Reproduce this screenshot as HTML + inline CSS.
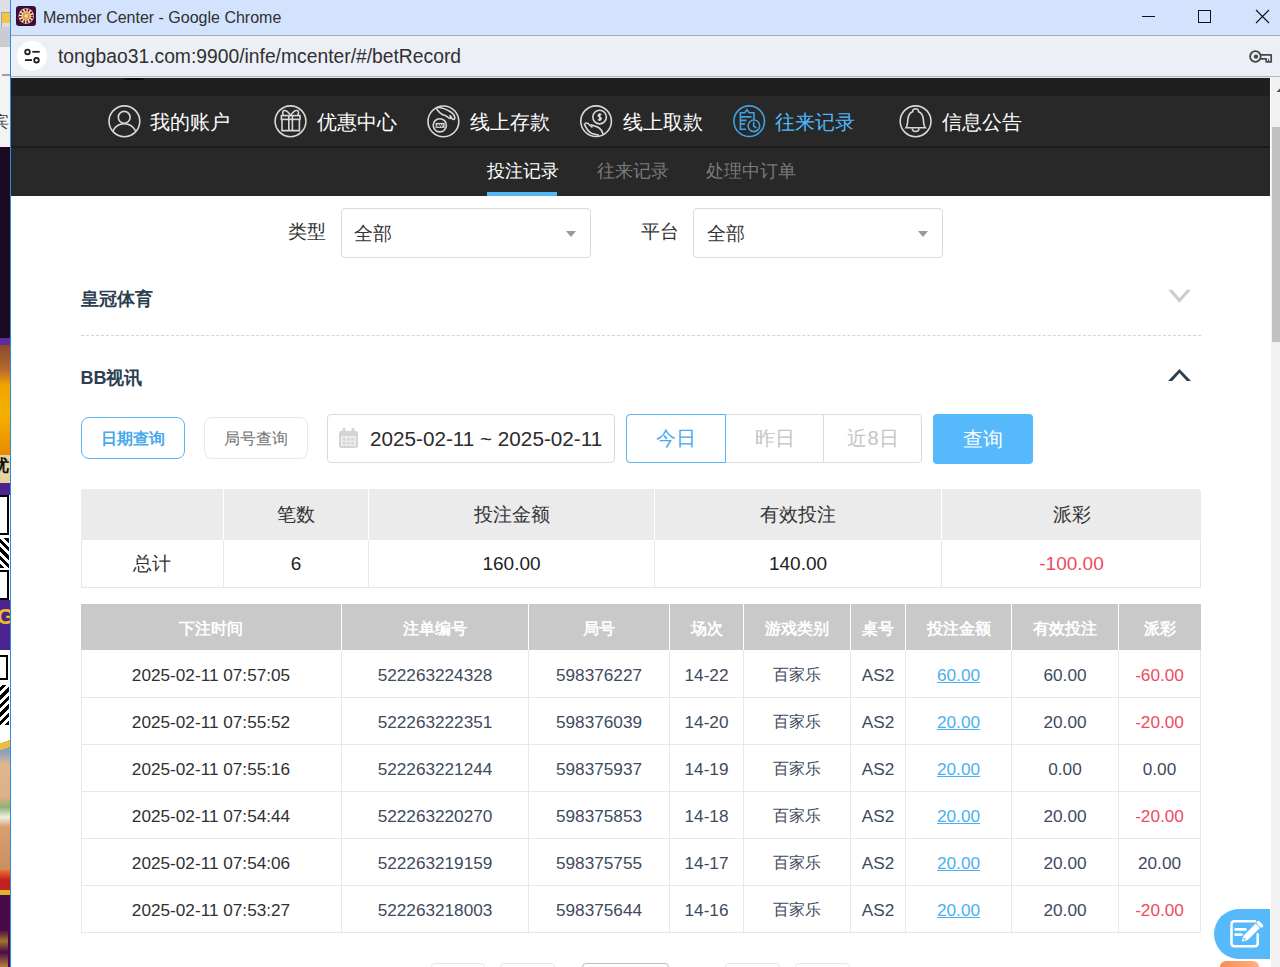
<!DOCTYPE html>
<html><head><meta charset="utf-8">
<style>
*{box-sizing:border-box;margin:0;padding:0}
html,body{width:1280px;height:967px;overflow:hidden;background:#fff;font-family:"Liberation Sans",sans-serif}
.a{position:absolute;white-space:nowrap}
#wborder{left:10px;top:0;width:1px;height:967px;background:#2b8be0}
#titlebar{left:11px;top:0;width:1269px;height:35px;background:#d3e3fd}
#tline{left:11px;top:35px;width:1269px;height:1px;background:#a6a9ae}
#addr{left:11px;top:36px;width:1269px;height:40px;background:#edeff7}
#aline{left:11px;top:76px;width:1269px;height:1px;background:#b4b6ba}
#sb{left:1270px;top:77px;width:10px;height:890px;background:#f1f1f1;border-left:1px solid #fff}
#thumb{left:1272px;top:127px;width:8px;height:215px;background:#c1c1c1}
.navt{font-size:20px;color:#fff;line-height:20px;top:112px}
.ico{top:104.6px;width:33px;height:33px}
.sub{font-size:17.5px;line-height:18px;top:161.5px;color:#7a7a7a}
.lbl{font-size:19px;line-height:20px;color:#333}
.sel{border:1px solid #dadada;border-radius:4px;background:#fff}
.tri{width:0;height:0;border-left:5.5px solid transparent;border-right:5.5px solid transparent;border-top:6px solid #999}
.h2{font-size:18px;font-weight:bold;color:#2c3e50;line-height:19px}
.btn{border-radius:8px;font-size:16.2px;line-height:16px;padding-top:0;display:flex;align-items:center;justify-content:center}
.seg{top:414px;height:49px;font-size:20px;color:#c4c4c4;display:flex;align-items:center;justify-content:center}
.c{position:absolute;display:flex;align-items:center;justify-content:center;white-space:nowrap}
.th{font-size:16px;font-weight:bold;color:#fff;padding-top:4px}
.td{font-size:17.2px;color:#3e4a5e;padding-top:4px}
.tk{color:#303030}
.cj{font-size:16px;color:#3e4a5e}
.lk span{color:#4ab0f2;text-decoration:underline}
.rd{color:#f04a5c}
</style></head><body>
<!-- desktop strip -->
<div class="a" style="left:0;top:0;width:10px;height:967px;overflow:hidden;background:#1c0b26">
<div class="a" style="left:0;top:0;width:10px;height:27px;background:#dcdfe4"></div>
<div class="a" style="left:1px;top:12px;width:9px;height:19px;background:linear-gradient(#f5c342 0,#f5c342 60%,#d8dde6 60%);border:1px solid #9aa6b8;border-right:none"></div>
<div class="a" style="left:0;top:27px;width:10px;height:20px;background:#c9ccd2"></div>
<div class="a" style="left:0;top:47px;width:10px;height:100px;background:#f3f3f3"></div>
<div class="a" style="left:2px;top:74px;width:8px;height:2px;background:#a0a0a0"></div>
<div class="a" style="left:-7px;top:114px;font-size:16px;line-height:16px;color:#333">宾</div>
<div class="a" style="left:0;top:147px;width:10px;height:191px;background:#1a0a24"></div>
<div class="a" style="left:0;top:338px;width:10px;height:7px;background:#5e2aa0"></div>
<div class="a" style="left:0;top:345px;width:10px;height:110px;background:linear-gradient(#8a4a2a 0,#b86a30 25px,#f0a400 40px,#f4b000 70px,#e88a00 110px)"></div>
<div class="a" style="left:0;top:455px;width:10px;height:28px;background:#e6d4a0"></div>
<div class="a" style="left:-8px;top:457px;font-size:17px;line-height:17px;font-weight:bold;color:#111">优</div>
<div class="a" style="left:0;top:483px;width:10px;height:12px;background:#4a2590"></div>
<div class="a" style="left:0;top:495px;width:10px;height:105px;background:#fff"></div>
<div class="a" style="left:0;top:495px;width:9px;height:40px;border:2px solid #000;border-left:none"></div>
<div class="a" style="left:0;top:538px;width:9px;height:30px;background:repeating-linear-gradient(45deg,#000 0,#000 3px,#fff 3px,#fff 6px)"></div>
<div class="a" style="left:0;top:570px;width:9px;height:30px;border:2px solid #000;border-left:none"></div>
<div class="a" style="left:0;top:600px;width:10px;height:50px;background:#4a2590"></div>
<div class="a" style="left:-3px;top:606px;font-size:22px;line-height:22px;font-weight:bold;color:#f0c020">G</div>
<div class="a" style="left:0;top:650px;width:10px;height:95px;background:#fff"></div>
<div class="a" style="left:0;top:655px;width:8px;height:25px;border:2px solid #000;border-left:none"></div>
<div class="a" style="left:0;top:685px;width:9px;height:40px;background:repeating-linear-gradient(-45deg,#000 0,#000 3px,#fff 3px,#fff 6px)"></div>
<div class="a" style="left:0;top:738px;width:10px;height:14px;background:linear-gradient(160deg,#fff 0,#fff 30%,#e8c040 30%,#e8c040 70%,#8aa0c0 70%)"></div>
<div class="a" style="left:0;top:752px;width:10px;height:118px;background:linear-gradient(#8aa0c0 0,#e0b890 12px,#dcb088 45px,#90b070 55px,#f0f0e0 65px,#d8a070 75px,#c89060 118px)"></div>
<div class="a" style="left:0;top:870px;width:10px;height:25px;background:linear-gradient(#f07030 0,#c02020 40%,#c02020 80%,#e0b030 80%)"></div>
<div class="a" style="left:0;top:895px;width:10px;height:72px;background:#4a0a48"></div>
<div class="a" style="left:0;top:930px;width:8px;height:37px;background:linear-gradient(#4a0a48 0,#c8a020 30%,#4a0a48 60%,#e0b030 100%);opacity:.7"></div>
</div>
<div class="a" id="wborder"></div>
<div class="a" id="titlebar"></div>
<div class="a" id="tline"></div>
<div class="a" id="addr"></div>
<div class="a" id="aline"></div>

<!-- favicon -->
<div class="a" style="left:16px;top:6px;width:20px;height:20px;background:#3b0f33;border-radius:3px"></div>
<svg class="a" style="left:16px;top:6px" width="20" height="20" viewBox="16 6 20 20"><circle cx="26.2" cy="16" r="7.7" fill="#f4ece8"/><circle cx="26.2" cy="16" r="5.9" fill="none" stroke="#8e1414" stroke-width="2.6" stroke-dasharray="1.75 1.34" transform="rotate(8 26.2 16)"/><circle cx="26.2" cy="16" r="3.9" fill="#dca634"/><circle cx="26.2" cy="16" r="1.7" fill="#eadcc0"/></svg>
<div class="a" style="left:43px;top:9.5px;font-size:16px;line-height:16px;color:#303030">Member Center - Google Chrome</div>
<!-- window controls -->
<div class="a" style="left:1142px;top:16px;width:13px;height:1px;background:#111"></div>
<div class="a" style="left:1198px;top:10px;width:13px;height:13px;border:1px solid #111"></div>
<svg class="a" style="left:1255px;top:9px" width="15" height="15" viewBox="0 0 15 15"><path d="M1 1L14 14M14 1L1 14" stroke="#111" stroke-width="1.1"/></svg>

<!-- address bar -->
<div class="a" style="left:17px;top:41px;width:30px;height:30px;border-radius:50%;background:#fff"></div>
<svg class="a" style="left:17px;top:41px" width="30" height="30" viewBox="0 0 30 30"><circle cx="10.5" cy="11" r="2.3" fill="none" stroke="#1f1f1f" stroke-width="1.8"/><path d="M15.3 10.8H22.7" stroke="#1f1f1f" stroke-width="1.8"/><circle cx="19.5" cy="19.3" r="2.3" fill="none" stroke="#1f1f1f" stroke-width="1.8"/><path d="M8 19.1H15" stroke="#1f1f1f" stroke-width="1.8"/></svg>
<div class="a" style="left:58px;top:47.3px;font-size:19.3px;line-height:20px;color:#303030">tongbao31.com:9900/infe/mcenter/#/betRecord</div>
<svg class="a" style="left:1244px;top:44px" width="36" height="26" viewBox="0 0 36 26"><circle cx="11.4" cy="12.5" r="5.3" fill="none" stroke="#474747" stroke-width="1.8"/><circle cx="12" cy="12.6" r="2.2" fill="#474747"/><path d="M16.2 10.9H27.2V17.8H22.2V14.8H16.4" fill="none" stroke="#474747" stroke-width="1.7" stroke-linejoin="round"/><path d="M24.6 14.8V17.5" stroke="#474747" stroke-width="1"/></svg>

<!-- page header -->
<div class="a" style="left:11px;top:77px;width:1259px;height:1px;background:#e8e8ec"></div><div class="a" style="left:11px;top:78px;width:1259px;height:18px;background:#1f1f1f"></div><div class="a" style="left:124px;top:78px;width:20px;height:2px;border-radius:50%;background:#050505"></div>
<div class="a" style="left:11px;top:96px;width:1259px;height:50px;background:#282828"></div>
<div class="a" style="left:11px;top:146px;width:1259px;height:2px;background:#1b1b1b"></div>
<div class="a" style="left:11px;top:148px;width:1259px;height:48px;background:#282828"></div>
<div class="a" id="sb"></div>
<div class="a" id="thumb"></div>
<svg class="a" style="left:1275.5px;top:87.5px" width="4.5" height="4.5" viewBox="0 0 6 6"><path d="M0 6L6 0V6Z" fill="#505050"/></svg>

<!-- NAV -->
<!--NAVSTART-->
<svg class="a ico" style="left:108px" viewBox="0 0 33 33" fill="none" stroke="#d8d8d8" stroke-width="1.6"><circle cx="16.4" cy="16.3" r="15.4"/><circle cx="16.2" cy="12.3" r="5.9"/><path d="M4.8 25.8C7.5 21 11.5 18.8 16.2 18.8S24.9 21 27.6 25.8"/></svg>
<div class="a navt" style="left:150px">我的账户</div>
<svg class="a ico" style="left:274px" viewBox="0 0 33 33" fill="none" stroke="#d8d8d8" stroke-width="1.6"><circle cx="16.5" cy="16.3" r="15.4"/><rect x="7.4" y="10.6" width="18.6" height="3.8"/><path d="M8 14.4V25.6H25.4V14.4M14.8 10.6V25.6M18.4 10.6V25.6"/><path d="M16.6 10.4C14.5 7.2 11.8 5 9.8 5.6C8.3 6.1 8.4 8.6 9.6 10.4M16.6 10.4C18.7 7.2 21.4 5 23.4 5.6C24.9 6.1 24.8 8.6 23.6 10.4"/></svg>
<div class="a navt" style="left:317px">优惠中心</div>
<svg class="a ico" style="left:427px" viewBox="0 0 33 33" fill="none" stroke="#d8d8d8" stroke-width="1.6"><circle cx="16.4" cy="16.4" r="15.4"/><path d="M9 2.6C11 6.5 14 9.5 18 10.6C20 11.2 21 12.6 22.6 13.2C24 13.7 24.6 12.6 23.8 11.6"/><path d="M10 2.2C14.5 2.4 20 4.5 23.8 7C26.4 8.8 28 11 27.8 13.5C27.4 14.8 26 14.6 25 13.4L22.5 10.2"/><circle cx="12.8" cy="20.3" r="6.6"/><rect x="8.6" y="17.9" width="9" height="5" fill="#d8d8d8" stroke="none"/><path d="M9.8 22L11 19.2L12.2 22L13.4 19.2L14.6 22L15.8 19.2" stroke="#282828" stroke-width="0.9"/></svg>
<div class="a navt" style="left:470px">线上存款</div>
<svg class="a ico" style="left:580px" viewBox="0 0 33 33" fill="none" stroke="#d8d8d8" stroke-width="1.6"><circle cx="16.1" cy="16.2" r="15.3"/><circle cx="19.6" cy="12.1" r="6.8"/><path d="M21.3 9.8C20.6 9 18.2 9 18.2 10.6C18.2 12.2 21.2 11.8 21.2 13.6C21.2 15.2 18.6 15.2 17.9 14.4M19.7 8.2V16" stroke-width="1.5"/><path d="M4.2 18.6C6 23 8.6 27 12 28.6L19 30.2"/><path d="M4.8 18.4C6.5 17.5 8.5 18.2 10 20.2L12.5 22.4"/><path d="M11 19.6C14 21 17 21.4 19.2 23C21.2 24.4 22.4 26.6 23 29"/></svg>
<div class="a navt" style="left:623px">线上取款</div>
<svg class="a ico" style="left:733px" viewBox="0 0 33 33" fill="none" stroke="#40a2e0" stroke-width="1.6"><circle cx="16.2" cy="16.2" r="15.3"/><path d="M13 24.3H7.4V7.8H11.8L13.9 4.6L16 7.8H20.9V14.8"/><path d="M7.4 11.9H18.5M7.4 15.4H13.5M7.4 18.9H12"/><circle cx="20.9" cy="20.8" r="5.8"/><path d="M20.7 16.8V21.2L23.5 23.2"/></svg>
<div class="a navt" style="left:775px;color:#50b8fa">往来记录</div>
<svg class="a ico" style="left:899px" viewBox="0 0 33 33" fill="none" stroke="#d8d8d8" stroke-width="1.6"><circle cx="16.6" cy="16.3" r="15.4"/><path d="M7 22.8H26.3C25 21 24.6 19 24.4 15C24 10.2 22.2 7.6 19.6 6.8C19.6 4.6 18.1 3.8 16.6 3.8S13.6 4.6 13.6 6.8C11 7.6 9.2 10.2 8.8 15C8.6 19 8.2 21 7 22.8Z"/><path d="M13.3 23.2C13.3 27.6 20 27.6 20 23.2"/></svg>
<div class="a navt" style="left:942px">信息公告</div>
<!-- subnav -->
<div class="a sub" style="left:487px;color:#fff">投注记录</div>
<div class="a" style="left:487px;top:192px;width:70px;height:4px;background:#55b6f6"></div>
<div class="a sub" style="left:597px">往来记录</div>
<div class="a sub" style="left:706px">处理中订单</div>
<!--NAVEND-->

<!-- CONTENT -->
<!--CONTENTSTART-->
<!-- filters -->
<div class="a lbl" style="left:288px;top:222px">类型</div>
<div class="a sel" style="left:341px;top:208px;width:250px;height:50px"></div>
<div class="a lbl" style="left:354px;top:224px">全部</div>
<div class="a tri" style="left:566px;top:231px"></div>
<div class="a lbl" style="left:641px;top:222px">平台</div>
<div class="a sel" style="left:693px;top:208px;width:250px;height:50px"></div>
<div class="a lbl" style="left:707px;top:224px">全部</div>
<div class="a tri" style="left:918px;top:231px"></div>
<!-- sections -->
<div class="a h2" style="left:81px;top:290px">皇冠体育</div>
<svg class="a" style="left:1160px;top:280px" width="40" height="30" viewBox="1160 280 40 30"><path d="M1168 289.7H1172.2L1179.5 298.2L1186.8 289.7H1191L1179.5 302.8Z" fill="#cccccc"/></svg>
<div class="a" style="left:81px;top:335px;width:1120px;height:1px;border-top:1px dashed #d4d4d4"></div>
<div class="a h2" style="left:80.5px;top:369px">BB视讯</div>
<svg class="a" style="left:1160px;top:360px" width="40" height="30" viewBox="1160 360 40 30"><path d="M1168 381H1172.2L1179.5 373L1186.8 381H1191L1179.5 368.9Z" fill="#2c3e50"/></svg>
<!-- buttons -->
<div class="a btn" style="left:81px;top:417px;width:104px;height:42px;border:1px solid #5cb4f2;color:#48a9ef;font-weight:bold">日期查询</div>
<div class="a btn" style="left:204px;top:417px;width:104px;height:42px;border:1px solid #e8e8e8;color:#707070">局号查询</div>
<div class="a sel" style="left:327px;top:414px;width:288px;height:49px"></div>
<svg class="a" style="left:338px;top:427px" width="21" height="22" viewBox="0 0 21 22"><rect x="1" y="4" width="19" height="17" rx="2" fill="#d4d4d4"/><rect x="3" y="9" width="15" height="10" fill="#ececec"/><g fill="#d4d4d4"><rect x="5" y="11" width="2.5" height="2.5"/><rect x="9.2" y="11" width="2.5" height="2.5"/><rect x="13.4" y="11" width="2.5" height="2.5"/><rect x="5" y="15" width="2.5" height="2.5"/><rect x="9.2" y="15" width="2.5" height="2.5"/><rect x="13.4" y="15" width="2.5" height="2.5"/></g><rect x="4.5" y="1" width="3" height="5" rx="1" fill="#d4d4d4"/><rect x="13.5" y="1" width="3" height="5" rx="1" fill="#d4d4d4"/></svg>
<div class="a" style="left:370px;top:429px;font-size:20.7px;line-height:20px;color:#2c2c2c">2025-02-11 ~ 2025-02-11</div>
<div class="a" style="left:626px;top:414px;width:296px;height:49px;border:1px solid #dadada;border-radius:4px"></div>
<div class="a seg" style="left:626px;width:100px;border:1px solid #5cb4f2;border-radius:4px 0 0 4px;color:#48a9ef">今日</div>
<div class="a seg" style="left:726px;width:97px">昨日</div>
<div class="a" style="left:823px;top:415px;width:1px;height:47px;background:#dadada"></div>
<div class="a seg" style="left:824px;width:98px">近8日</div>
<div class="a seg" style="left:933px;width:100px;height:50px;background:#56b9fb;border-radius:4px;color:#fff">查询</div>
<!-- summary table -->
<div class="a" style="left:81px;top:489px;width:1120px;height:99px;border:1px solid #e6e6e6;border-top:none;border-radius:4px 4px 0 0"></div>
<div class="a" style="left:81px;top:489px;width:1120px;height:51px;background:#ebebeb;border-radius:4px 4px 0 0"></div>
<div class="a" style="left:223px;top:489px;width:1px;height:98px;background:linear-gradient(#fff 0,#fff 51px,#e8e8e8 51px)"></div>
<div class="a" style="left:368px;top:489px;width:1px;height:98px;background:linear-gradient(#fff 0,#fff 51px,#e8e8e8 51px)"></div>
<div class="a" style="left:654px;top:489px;width:1px;height:98px;background:linear-gradient(#fff 0,#fff 51px,#e8e8e8 51px)"></div>
<div class="a" style="left:941px;top:489px;width:1px;height:98px;background:linear-gradient(#fff 0,#fff 51px,#e8e8e8 51px)"></div>
<div class="c lbl" style="left:224px;top:489px;width:144px;height:51px">笔数</div>
<div class="c lbl" style="left:369px;top:489px;width:285px;height:51px">投注金额</div>
<div class="c lbl" style="left:655px;top:489px;width:286px;height:51px">有效投注</div>
<div class="c lbl" style="left:942px;top:489px;width:259px;height:51px">派彩</div>
<div class="c lbl" style="left:81px;top:540px;width:142px;height:47px">总计</div>
<div class="c lbl" style="left:224px;top:540px;width:144px;height:47px;color:#222">6</div>
<div class="c lbl" style="left:369px;top:540px;width:285px;height:47px;color:#222">160.00</div>
<div class="c lbl" style="left:655px;top:540px;width:286px;height:47px;color:#222">140.00</div>
<div class="c lbl" style="left:942px;top:540px;width:259px;height:47px;color:#f04a5c">-100.00</div>
<!-- detail table -->
<div class="a" style="left:81px;top:604px;width:1120px;height:46px;background:#c9c9c9"></div>
<div class="a" style="left:81px;top:650px;width:1120px;height:283px;border:1px solid #e8e8e8;border-top:none"></div>
<div class="a" style="left:81px;top:697px;width:1120px;height:1px;background:#e8e8e8"></div>
<div class="a" style="left:81px;top:744px;width:1120px;height:1px;background:#e8e8e8"></div>
<div class="a" style="left:81px;top:791px;width:1120px;height:1px;background:#e8e8e8"></div>
<div class="a" style="left:81px;top:838px;width:1120px;height:1px;background:#e8e8e8"></div>
<div class="a" style="left:81px;top:885px;width:1120px;height:1px;background:#e8e8e8"></div>
<div class="a" style="left:341px;top:604px;width:1px;height:329px;background:linear-gradient(#fff 0,#fff 46px,#e8e8e8 46px)"></div>
<div class="a" style="left:528px;top:604px;width:1px;height:329px;background:linear-gradient(#fff 0,#fff 46px,#e8e8e8 46px)"></div>
<div class="a" style="left:669px;top:604px;width:1px;height:329px;background:linear-gradient(#fff 0,#fff 46px,#e8e8e8 46px)"></div>
<div class="a" style="left:743px;top:604px;width:1px;height:329px;background:linear-gradient(#fff 0,#fff 46px,#e8e8e8 46px)"></div>
<div class="a" style="left:850px;top:604px;width:1px;height:329px;background:linear-gradient(#fff 0,#fff 46px,#e8e8e8 46px)"></div>
<div class="a" style="left:905px;top:604px;width:1px;height:329px;background:linear-gradient(#fff 0,#fff 46px,#e8e8e8 46px)"></div>
<div class="a" style="left:1011px;top:604px;width:1px;height:329px;background:linear-gradient(#fff 0,#fff 46px,#e8e8e8 46px)"></div>
<div class="a" style="left:1118px;top:604px;width:1px;height:329px;background:linear-gradient(#fff 0,#fff 46px,#e8e8e8 46px)"></div>
<div class="c th" style="left:81px;top:604px;width:260px;height:46px">下注时间</div>
<div class="c th" style="left:342px;top:604px;width:186px;height:46px">注单编号</div>
<div class="c th" style="left:529px;top:604px;width:140px;height:46px">局号</div>
<div class="c th" style="left:670px;top:604px;width:73px;height:46px">场次</div>
<div class="c th" style="left:744px;top:604px;width:106px;height:46px">游戏类别</div>
<div class="c th" style="left:851px;top:604px;width:54px;height:46px">桌号</div>
<div class="c th" style="left:906px;top:604px;width:105px;height:46px">投注金额</div>
<div class="c th" style="left:1012px;top:604px;width:106px;height:46px">有效投注</div>
<div class="c th" style="left:1119px;top:604px;width:81px;height:46px">派彩</div>
<div class="c td tk" style="left:81px;top:650px;width:260px;height:46px"><span>2025-02-11 07:57:05</span></div>
<div class="c td" style="left:342px;top:650px;width:186px;height:46px"><span>522263224328</span></div>
<div class="c td" style="left:529px;top:650px;width:140px;height:46px"><span>598376227</span></div>
<div class="c td" style="left:670px;top:650px;width:73px;height:46px"><span>14-22</span></div>
<div class="c td tk" style="left:744px;top:650px;width:106px;height:46px"><span class="cj">百家乐</span></div>
<div class="c td" style="left:851px;top:650px;width:54px;height:46px"><span>AS2</span></div>
<div class="c td lk" style="left:906px;top:650px;width:105px;height:46px"><span>60.00</span></div>
<div class="c td" style="left:1012px;top:650px;width:106px;height:46px"><span>60.00</span></div>
<div class="c td rd" style="left:1119px;top:650px;width:81px;height:46px"><span>-60.00</span></div>
<div class="c td tk" style="left:81px;top:697px;width:260px;height:46px"><span>2025-02-11 07:55:52</span></div>
<div class="c td" style="left:342px;top:697px;width:186px;height:46px"><span>522263222351</span></div>
<div class="c td" style="left:529px;top:697px;width:140px;height:46px"><span>598376039</span></div>
<div class="c td" style="left:670px;top:697px;width:73px;height:46px"><span>14-20</span></div>
<div class="c td tk" style="left:744px;top:697px;width:106px;height:46px"><span class="cj">百家乐</span></div>
<div class="c td" style="left:851px;top:697px;width:54px;height:46px"><span>AS2</span></div>
<div class="c td lk" style="left:906px;top:697px;width:105px;height:46px"><span>20.00</span></div>
<div class="c td" style="left:1012px;top:697px;width:106px;height:46px"><span>20.00</span></div>
<div class="c td rd" style="left:1119px;top:697px;width:81px;height:46px"><span>-20.00</span></div>
<div class="c td tk" style="left:81px;top:744px;width:260px;height:46px"><span>2025-02-11 07:55:16</span></div>
<div class="c td" style="left:342px;top:744px;width:186px;height:46px"><span>522263221244</span></div>
<div class="c td" style="left:529px;top:744px;width:140px;height:46px"><span>598375937</span></div>
<div class="c td" style="left:670px;top:744px;width:73px;height:46px"><span>14-19</span></div>
<div class="c td tk" style="left:744px;top:744px;width:106px;height:46px"><span class="cj">百家乐</span></div>
<div class="c td" style="left:851px;top:744px;width:54px;height:46px"><span>AS2</span></div>
<div class="c td lk" style="left:906px;top:744px;width:105px;height:46px"><span>20.00</span></div>
<div class="c td" style="left:1012px;top:744px;width:106px;height:46px"><span>0.00</span></div>
<div class="c td" style="left:1119px;top:744px;width:81px;height:46px"><span>0.00</span></div>
<div class="c td tk" style="left:81px;top:791px;width:260px;height:46px"><span>2025-02-11 07:54:44</span></div>
<div class="c td" style="left:342px;top:791px;width:186px;height:46px"><span>522263220270</span></div>
<div class="c td" style="left:529px;top:791px;width:140px;height:46px"><span>598375853</span></div>
<div class="c td" style="left:670px;top:791px;width:73px;height:46px"><span>14-18</span></div>
<div class="c td tk" style="left:744px;top:791px;width:106px;height:46px"><span class="cj">百家乐</span></div>
<div class="c td" style="left:851px;top:791px;width:54px;height:46px"><span>AS2</span></div>
<div class="c td lk" style="left:906px;top:791px;width:105px;height:46px"><span>20.00</span></div>
<div class="c td" style="left:1012px;top:791px;width:106px;height:46px"><span>20.00</span></div>
<div class="c td rd" style="left:1119px;top:791px;width:81px;height:46px"><span>-20.00</span></div>
<div class="c td tk" style="left:81px;top:838px;width:260px;height:46px"><span>2025-02-11 07:54:06</span></div>
<div class="c td" style="left:342px;top:838px;width:186px;height:46px"><span>522263219159</span></div>
<div class="c td" style="left:529px;top:838px;width:140px;height:46px"><span>598375755</span></div>
<div class="c td" style="left:670px;top:838px;width:73px;height:46px"><span>14-17</span></div>
<div class="c td tk" style="left:744px;top:838px;width:106px;height:46px"><span class="cj">百家乐</span></div>
<div class="c td" style="left:851px;top:838px;width:54px;height:46px"><span>AS2</span></div>
<div class="c td lk" style="left:906px;top:838px;width:105px;height:46px"><span>20.00</span></div>
<div class="c td" style="left:1012px;top:838px;width:106px;height:46px"><span>20.00</span></div>
<div class="c td" style="left:1119px;top:838px;width:81px;height:46px"><span>20.00</span></div>
<div class="c td tk" style="left:81px;top:885px;width:260px;height:46px"><span>2025-02-11 07:53:27</span></div>
<div class="c td" style="left:342px;top:885px;width:186px;height:46px"><span>522263218003</span></div>
<div class="c td" style="left:529px;top:885px;width:140px;height:46px"><span>598375644</span></div>
<div class="c td" style="left:670px;top:885px;width:73px;height:46px"><span>14-16</span></div>
<div class="c td tk" style="left:744px;top:885px;width:106px;height:46px"><span class="cj">百家乐</span></div>
<div class="c td" style="left:851px;top:885px;width:54px;height:46px"><span>AS2</span></div>
<div class="c td lk" style="left:906px;top:885px;width:105px;height:46px"><span>20.00</span></div>
<div class="c td" style="left:1012px;top:885px;width:106px;height:46px"><span>20.00</span></div>
<div class="c td rd" style="left:1119px;top:885px;width:81px;height:46px"><span>-20.00</span></div>
<!-- float btn -->
<div class="a" style="left:1214px;top:909px;width:56px;height:50px;background:#56b9fb;border-radius:25px 0 0 25px"></div>
<svg class="a" style="left:1228px;top:918px" width="38" height="32" viewBox="0 0 38 32"><path d="M26.9 3.3H6.5C4.8 3.3 3.5 4.6 3.5 6.3V25.3C3.5 27 4.8 28.3 6.5 28.3H26.7C28.4 28.3 29.7 27 29.7 25.3V16.2" fill="none" stroke="#fff" stroke-width="2.5" stroke-linecap="round"/><path d="M7.5 11.4H17.5M7.5 16.6H13.5" stroke="#fff" stroke-width="2.6" stroke-linecap="round"/><path d="M14.2 23.2L16 17.6L27.6 6L31.5 9.9L19.9 21.5Z" fill="#fff" stroke="#fff" stroke-width="0.8" stroke-linejoin="round"/><path d="M15.6 21.8L17.2 20.2" stroke="#56b9fb" stroke-width="1.3"/><path d="M30.2 4.6L33.4 7.8" stroke="#fff" stroke-width="3.6" stroke-linecap="round"/></svg>
<div class="a" style="left:1220px;top:961px;width:39px;height:10px;background:linear-gradient(90deg,#f98b58,#ffb27a);border-radius:6px 6px 0 0"></div>
<!-- pagination tops -->
<div class="a" style="left:431px;top:963px;width:54px;height:20px;border:1px solid #e6e6e6;border-radius:4px"></div>
<div class="a" style="left:500px;top:963px;width:55px;height:20px;border:1px solid #e6e6e6;border-radius:4px"></div>
<div class="a" style="left:582px;top:963px;width:87px;height:20px;border:1px solid #bdbdbd;border-radius:4px"></div>
<div class="a" style="left:725px;top:963px;width:55px;height:20px;border:1px solid #e6e6e6;border-radius:4px"></div>
<div class="a" style="left:795px;top:963px;width:55px;height:20px;border:1px solid #e6e6e6;border-radius:4px"></div>
<!--CONTENTEND-->
</body></html>
